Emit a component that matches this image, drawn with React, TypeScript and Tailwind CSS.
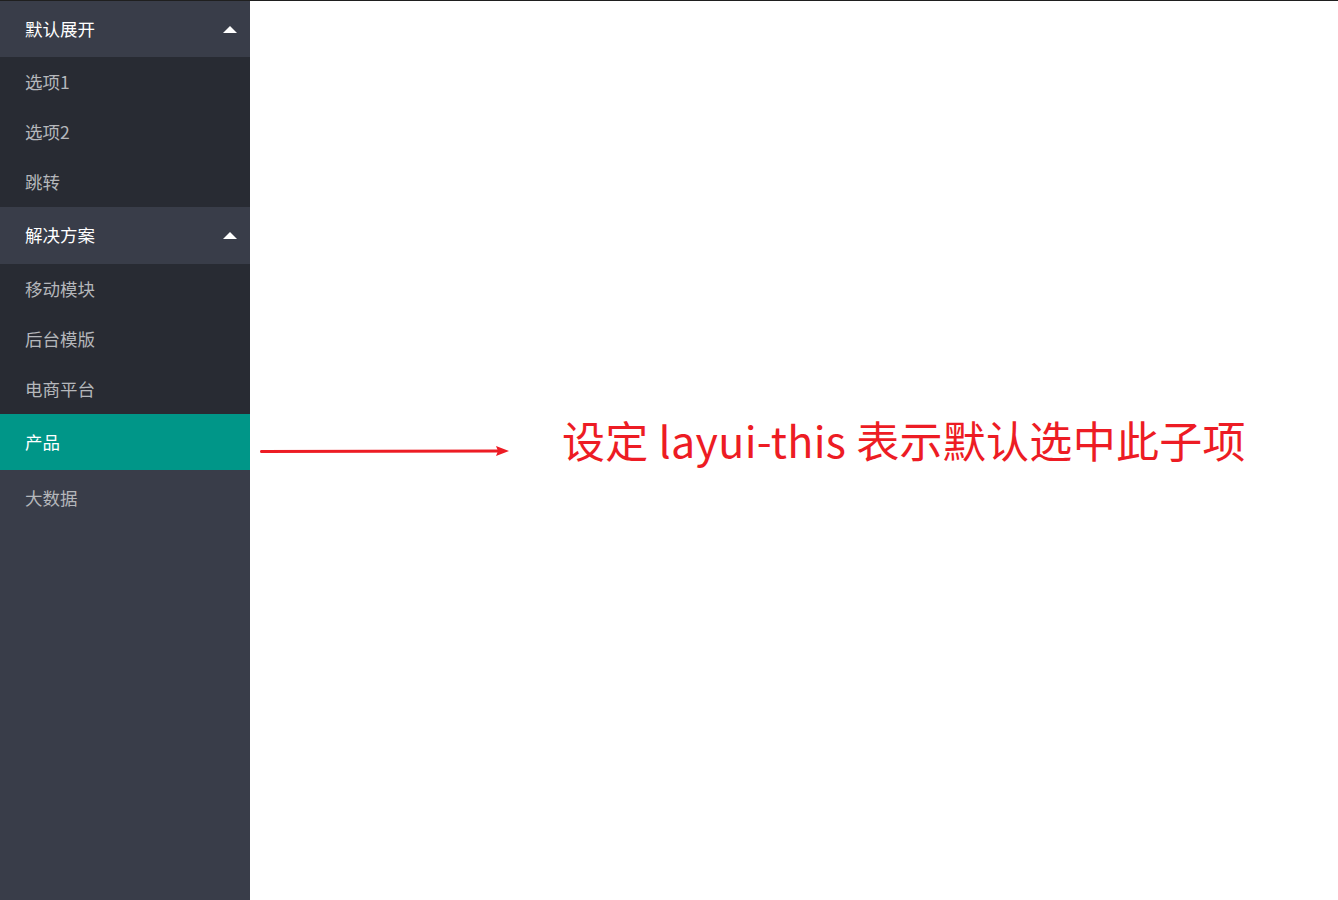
const font = { fontFamily: '"Noto Sans CJK SC", "Noto Sans", sans-serif' };

function Caret() {
  return (
    <svg width="14" height="7" viewBox="0 0 14 7" className="block">
      <path d="M0 7 L7 0 L14 7 Z" fill="#ffffff" />
    </svg>
  );
}

function Group({ title, items, head }: { title: string; items: string[]; head: string }) {
  return (
    <div>
      <div className={`${head} flex items-center justify-between pl-[25px] pr-[13px] bg-[#393D49] text-white text-[17.5px]`}>
        <span>{title}</span>
        <Caret />
      </div>
      <div className="bg-[#282B33]">
        {items.map((item) => (
          <div key={item} className="h-[50px] flex items-center pl-[25px] text-[17.5px] text-[#b5b7bb]">
            {item}
          </div>
        ))}
      </div>
    </div>
  );
}

export default function App() {
  return (
    <div className="w-[1338px] h-[900px] bg-white border-t border-[#1f1f1f] flex overflow-hidden" style={font}>
      <div className="w-[250px] h-full bg-[#393D49] rounded-tr-[2px] flex flex-col">
        <Group title="默认展开" items={["选项1", "选项2", "跳转"]} head="h-[56px]" />
        <Group title="解决方案" items={["移动模块", "后台模版", "电商平台"]} head="h-[57px]" />
        <div className="h-[56px] flex items-center pl-[25px] bg-[#009688] text-white text-[17.5px]">产品</div>
        <div className="h-[56px] flex items-center pl-[25px] text-[17.5px] text-[#b5b7bb]">大数据</div>
      </div>
      <div className="flex-1">
        <div className="mt-[410px] flex items-center">
          <svg width="250" height="14" viewBox="0 0 250 14" className="ml-[10px] mt-[24px] block">
            <line x1="1.5" y1="7.5" x2="240" y2="7" stroke="#ED1C24" strokeWidth="3" strokeLinecap="round" />
            <path d="M236 2 L249 7 L236 12 L238 7 Z" fill="#ED1C24" />
          </svg>
          <span className="ml-[52px] text-[43px] leading-[56px] tracking-[0.3px] text-[#ED1C24] whitespace-nowrap">
            设定 layui-this 表示默认选中此子项
          </span>
        </div>
      </div>
    </div>
  );
}
